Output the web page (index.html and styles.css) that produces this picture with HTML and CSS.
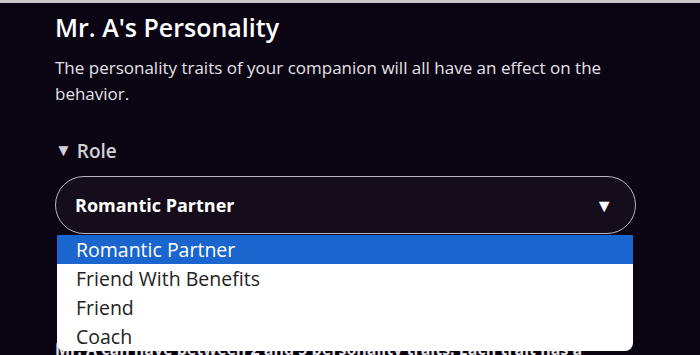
FILE: index.html
```html
<!DOCTYPE html>
<html lang="en">
<head>
    <meta charset="UTF-8">
    <meta name="viewport" content="width=device-width, initial-scale=1.0">
    <title>Personality</title>
    <link rel="stylesheet" href="styles.css">
</head>
<body>
    <div class="top-bar"></div>
    <main class="panel">
        <h1>Mr. A's Personality</h1>
        <p class="intro">The personality traits of your companion will all have an effect on the behavior.</p>

        <div class="section-title"><span class="arrow">&#9660;</span> Role</div>

        <!-- Role picker, shown open -->
        <div class="role-field">
            <div class="select-box">
                <span>Romantic Partner</span>
                <span class="caret">&#9660;</span>
            </div>
            <ul class="options">
                <li class="selected">Romantic Partner</li>
                <li>Friend With Benefits</li>
                <li>Friend</li>
                <li>Coach</li>
            </ul>
        </div>

        <p class="traits">Mr. A can have between 2 and 5 personality traits. Each trait has a</p>
    </main>
</body>
</html>
```

FILE: styles.css
```css
body {
    margin: 0;
    padding: 0;
    background-color: #0b0513;
    color: #fff;
    font-family: 'Open Sans', 'Noto Sans', sans-serif;
    overflow: hidden;
}

.top-bar {
    height: 3px;
    background: #c9c9c9;
}

.panel {
    padding: 0 64px 0 55px;
}

h1 {
    margin: 8px 0 0;
    font-size: 25px;
    font-weight: 600;
    line-height: 32px;
}

.intro {
    margin: 12px 0 0;
    font-size: 17px;
    line-height: 26px;
    color: #e4e2e8;
    max-width: 575px;
}

.section-title {
    margin-top: 31px;
    font-size: 19px;
    font-weight: 600;
    color: #d2d0d6;
    line-height: 26px;
}

.arrow {
    font-size: 17px;
    position: relative;
    top: -2px;
}

.role-field {
    position: relative;
    margin-top: 11px;
    width: 581px;
}

.select-box {
    display: flex;
    justify-content: space-between;
    align-items: center;
    height: 56px;
    padding: 0 22px 0 19px;
    border: 1px solid #b8b4bc;
    border-radius: 30px;
    background: #150d1b;
    font-size: 18px;
    font-weight: 700;
}

.caret {
    font-size: 18px;
}

.options {
    position: absolute;
    top: 59px;
    left: 2px;
    right: 3px;
    margin: 0;
    padding: 0;
    list-style: none;
    background: #fff;
    border-radius: 0 0 8px 8px;
    overflow: hidden;
    z-index: 2;
}

.options li {
    height: 29px;
    line-height: 29px;
    padding-left: 19px;
    font-size: 19.5px;
    color: #222;
}

.options li.selected {
    background: #1b65cf;
    color: #fff;
}

.traits {
    margin: 104px 0 0;
    font-size: 16px;
    line-height: 22px;
    font-weight: 700;
    color: #e8e6ea;
    white-space: nowrap;
}
```
